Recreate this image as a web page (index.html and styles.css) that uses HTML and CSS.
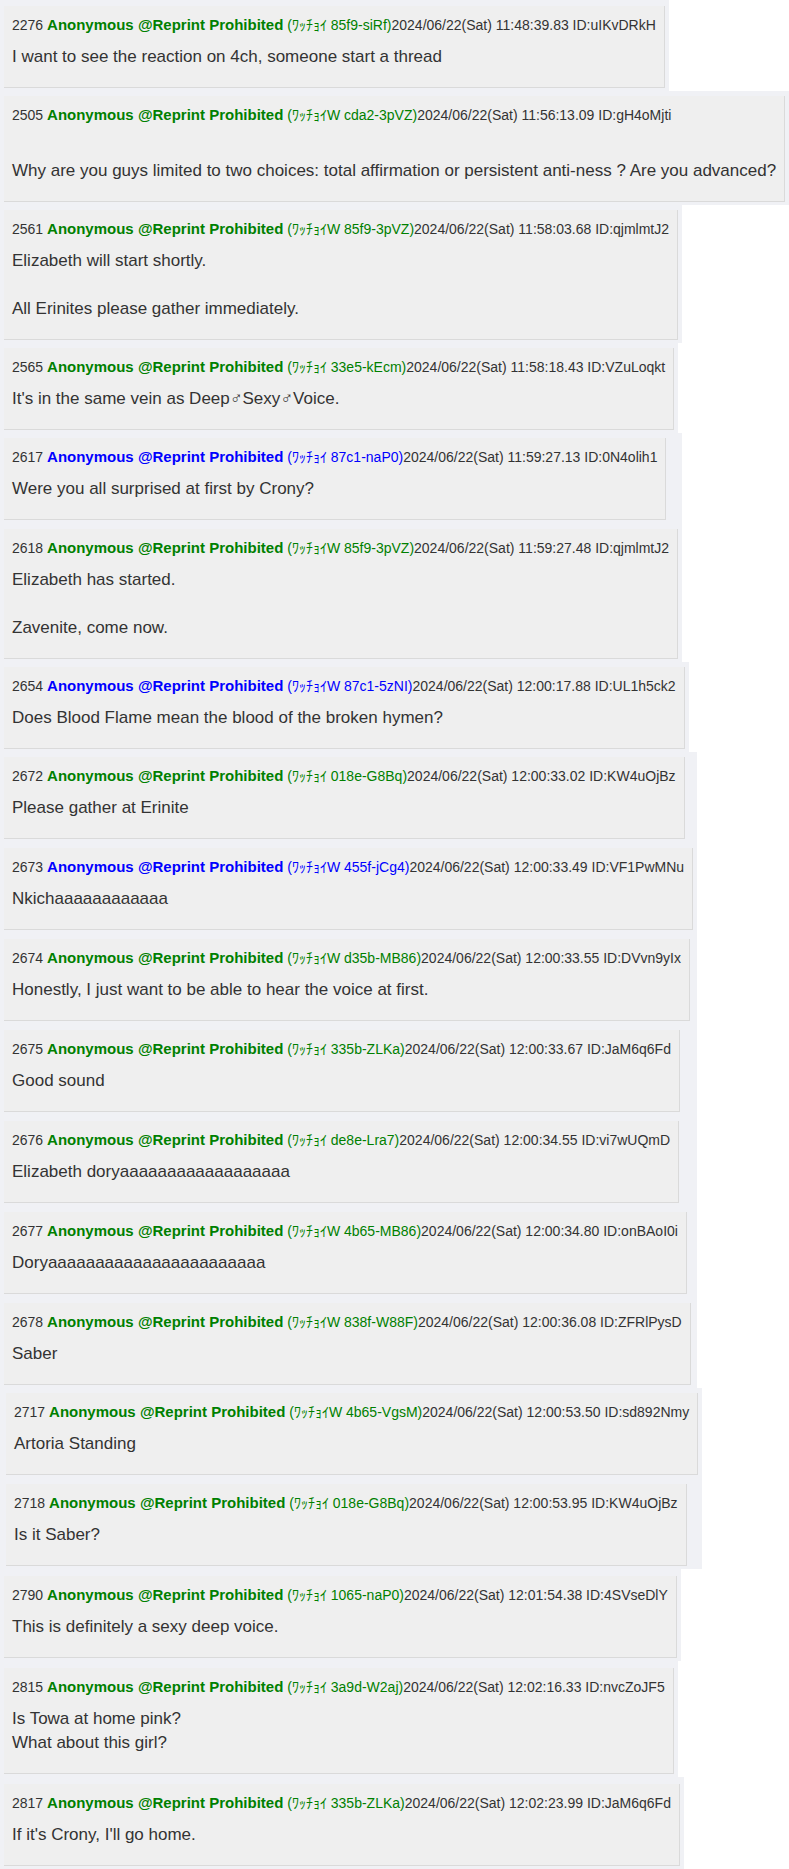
FILE: index.html
```html
<!DOCTYPE html>
<html lang="en">
<head>
    <meta charset="UTF-8">
    <meta name="viewport" content="width=device-width, initial-scale=1.0">
    <title>Thread excerpts</title>
    <link rel="stylesheet" href="styles.css">
</head>
<body>
    <div class="group first">
        <div class="post">
            <div class="post-head">2276 <b class="name">Anonymous @Reprint Prohibited</b> <span class="uid">(<span class="kana">ﾜｯﾁｮｲ</span> 85f9-siRf)</span>2024/06/22(Sat) 11:48:39.83 ID:uIKvDRkH</div>
            <div class="post-body">I want to see the reaction on 4ch, someone start a thread</div>
        </div>
    </div>

    <div class="group">
        <div class="post">
            <div class="post-head">2505 <b class="name">Anonymous @Reprint Prohibited</b> <span class="uid">(<span class="kana">ﾜｯﾁｮｲ</span>W cda2-3pVZ)</span>2024/06/22(Sat) 11:56:13.09 ID:gH4oMjti</div>
            <div class="post-body"><br>Why are you guys limited to two choices: total affirmation or persistent anti-ness ? Are you advanced?</div>
        </div>
    </div>

    <div class="group">
        <div class="post">
            <div class="post-head">2561 <b class="name">Anonymous @Reprint Prohibited</b> <span class="uid">(<span class="kana">ﾜｯﾁｮｲ</span>W 85f9-3pVZ)</span>2024/06/22(Sat) 11:58:03.68 ID:qjmlmtJ2</div>
            <div class="post-body">Elizabeth will start shortly.<br><br>All Erinites please gather immediately.</div>
        </div>
    </div>

    <div class="group">
        <div class="post">
            <div class="post-head">2565 <b class="name">Anonymous @Reprint Prohibited</b> <span class="uid">(<span class="kana">ﾜｯﾁｮｲ</span> 33e5-kEcm)</span>2024/06/22(Sat) 11:58:18.43 ID:VZuLoqkt</div>
            <div class="post-body">It's in the same vein as Deep<span class="sym">♂</span>Sexy<span class="sym">♂</span>Voice.</div>
        </div>
    </div>

    <div class="group">
        <div class="post blue">
            <div class="post-head">2617 <b class="name">Anonymous @Reprint Prohibited</b> <span class="uid">(<span class="kana">ﾜｯﾁｮｲ</span> 87c1-naP0)</span>2024/06/22(Sat) 11:59:27.13 ID:0N4olih1</div>
            <div class="post-body">Were you all surprised at first by Crony?</div>
        </div>
        <div class="post">
            <div class="post-head">2618 <b class="name">Anonymous @Reprint Prohibited</b> <span class="uid">(<span class="kana">ﾜｯﾁｮｲ</span>W 85f9-3pVZ)</span>2024/06/22(Sat) 11:59:27.48 ID:qjmlmtJ2</div>
            <div class="post-body">Elizabeth has started.<br><br>Zavenite, come now.</div>
        </div>
    </div>

    <div class="group">
        <div class="post blue">
            <div class="post-head">2654 <b class="name">Anonymous @Reprint Prohibited</b> <span class="uid">(<span class="kana">ﾜｯﾁｮｲ</span>W 87c1-5zNI)</span>2024/06/22(Sat) 12:00:17.88 ID:UL1h5ck2</div>
            <div class="post-body">Does Blood Flame mean the blood of the broken hymen?</div>
        </div>
    </div>

    <div class="group">
        <div class="post">
            <div class="post-head">2672 <b class="name">Anonymous @Reprint Prohibited</b> <span class="uid">(<span class="kana">ﾜｯﾁｮｲ</span> 018e-G8Bq)</span>2024/06/22(Sat) 12:00:33.02 ID:KW4uOjBz</div>
            <div class="post-body">Please gather at Erinite</div>
        </div>
        <div class="post blue">
            <div class="post-head">2673 <b class="name">Anonymous @Reprint Prohibited</b> <span class="uid">(<span class="kana">ﾜｯﾁｮｲ</span>W 455f-jCg4)</span>2024/06/22(Sat) 12:00:33.49 ID:VF1PwMNu</div>
            <div class="post-body">Nkichaaaaaaaaaaaa</div>
        </div>
        <div class="post">
            <div class="post-head">2674 <b class="name">Anonymous @Reprint Prohibited</b> <span class="uid">(<span class="kana">ﾜｯﾁｮｲ</span>W d35b-MB86)</span>2024/06/22(Sat) 12:00:33.55 ID:DVvn9yIx</div>
            <div class="post-body">Honestly, I just want to be able to hear the voice at first.</div>
        </div>
        <div class="post">
            <div class="post-head">2675 <b class="name">Anonymous @Reprint Prohibited</b> <span class="uid">(<span class="kana">ﾜｯﾁｮｲ</span> 335b-ZLKa)</span>2024/06/22(Sat) 12:00:33.67 ID:JaM6q6Fd</div>
            <div class="post-body">Good sound</div>
        </div>
        <div class="post">
            <div class="post-head">2676 <b class="name">Anonymous @Reprint Prohibited</b> <span class="uid">(<span class="kana">ﾜｯﾁｮｲ</span> de8e-Lra7)</span>2024/06/22(Sat) 12:00:34.55 ID:vi7wUQmD</div>
            <div class="post-body">Elizabeth doryaaaaaaaaaaaaaaaaaa</div>
        </div>
        <div class="post">
            <div class="post-head">2677 <b class="name">Anonymous @Reprint Prohibited</b> <span class="uid">(<span class="kana">ﾜｯﾁｮｲ</span>W 4b65-MB86)</span>2024/06/22(Sat) 12:00:34.80 ID:onBAoI0i</div>
            <div class="post-body">Doryaaaaaaaaaaaaaaaaaaaaaaa</div>
        </div>
        <div class="post">
            <div class="post-head">2678 <b class="name">Anonymous @Reprint Prohibited</b> <span class="uid">(<span class="kana">ﾜｯﾁｮｲ</span>W 838f-W88F)</span>2024/06/22(Sat) 12:00:36.08 ID:ZFRlPysD</div>
            <div class="post-body">Saber</div>
        </div>
    </div>

    <div class="group shift">
        <div class="post">
            <div class="post-head">2717 <b class="name">Anonymous @Reprint Prohibited</b> <span class="uid">(<span class="kana">ﾜｯﾁｮｲ</span>W 4b65-VgsM)</span>2024/06/22(Sat) 12:00:53.50 ID:sd892Nmy</div>
            <div class="post-body">Artoria Standing</div>
        </div>
        <div class="post">
            <div class="post-head">2718 <b class="name">Anonymous @Reprint Prohibited</b> <span class="uid">(<span class="kana">ﾜｯﾁｮｲ</span> 018e-G8Bq)</span>2024/06/22(Sat) 12:00:53.95 ID:KW4uOjBz</div>
            <div class="post-body">Is it Saber?</div>
        </div>
    </div>

    <div class="group loose">
        <div class="post">
            <div class="post-head">2790 <b class="name">Anonymous @Reprint Prohibited</b> <span class="uid">(<span class="kana">ﾜｯﾁｮｲ</span> 1065-naP0)</span>2024/06/22(Sat) 12:01:54.38 ID:4SVseDlY</div>
            <div class="post-body">This is definitely a sexy deep voice.</div>
        </div>
    </div>

    <div class="group loose">
        <div class="post">
            <div class="post-head">2815 <b class="name">Anonymous @Reprint Prohibited</b> <span class="uid">(<span class="kana">ﾜｯﾁｮｲ</span> 3a9d-W2aj)</span>2024/06/22(Sat) 12:02:16.33 ID:nvcZoJF5</div>
            <div class="post-body">Is Towa at home pink?<br>What about this girl?</div>
        </div>
    </div>

    <div class="group loose">
        <div class="post">
            <div class="post-head">2817 <b class="name">Anonymous @Reprint Prohibited</b> <span class="uid">(<span class="kana">ﾜｯﾁｮｲ</span> 335b-ZLKa)</span>2024/06/22(Sat) 12:02:23.99 ID:JaM6q6Fd</div>
            <div class="post-body">If it's Crony, I'll go home.</div>
        </div>
    </div>
</body>
</html>
```

FILE: styles.css
```css
body {
    margin: 0;
    background-color: #fff;
    color: #333;
    font-family: "Liberation Sans", Arial, "Noto Sans CJK JP", sans-serif;
    overflow-x: hidden;
}
.group {
    width: max-content;
    display: flex;
    flex-direction: column;
    align-items: flex-start;
    gap: 9px;
    padding: 5px 4px 3px 4px;
    background-color: #f0f1f5;
}
.group.first {
    padding-top: 6px;
}
.group.shift {
    padding-left: 6px;
}
.group.loose {
    padding-top: 7px;
}
.post {
    background-color: #efefef;
    border-right: 1px solid #dadada;
    border-bottom: 1px solid #dadada;
    padding: 9px 8px 18px 8px;
}
.post-head {
    font-size: 14px;
    line-height: 20px;
    height: 20px;
    white-space: nowrap;
}
.name {
    font-size: 15px;
    color: #008000;
}
.uid {
    color: #008000;
}
.kana {
    font-family: "Noto Sans CJK JP", sans-serif;
    line-height: 1;
}
.blue .name, .blue .uid {
    color: #0000ff;
}
.post-body {
    font-size: 17px;
    line-height: 24px;
    margin-top: 10px;
    white-space: nowrap;
}
.sym {
    line-height: 1;
}
```
